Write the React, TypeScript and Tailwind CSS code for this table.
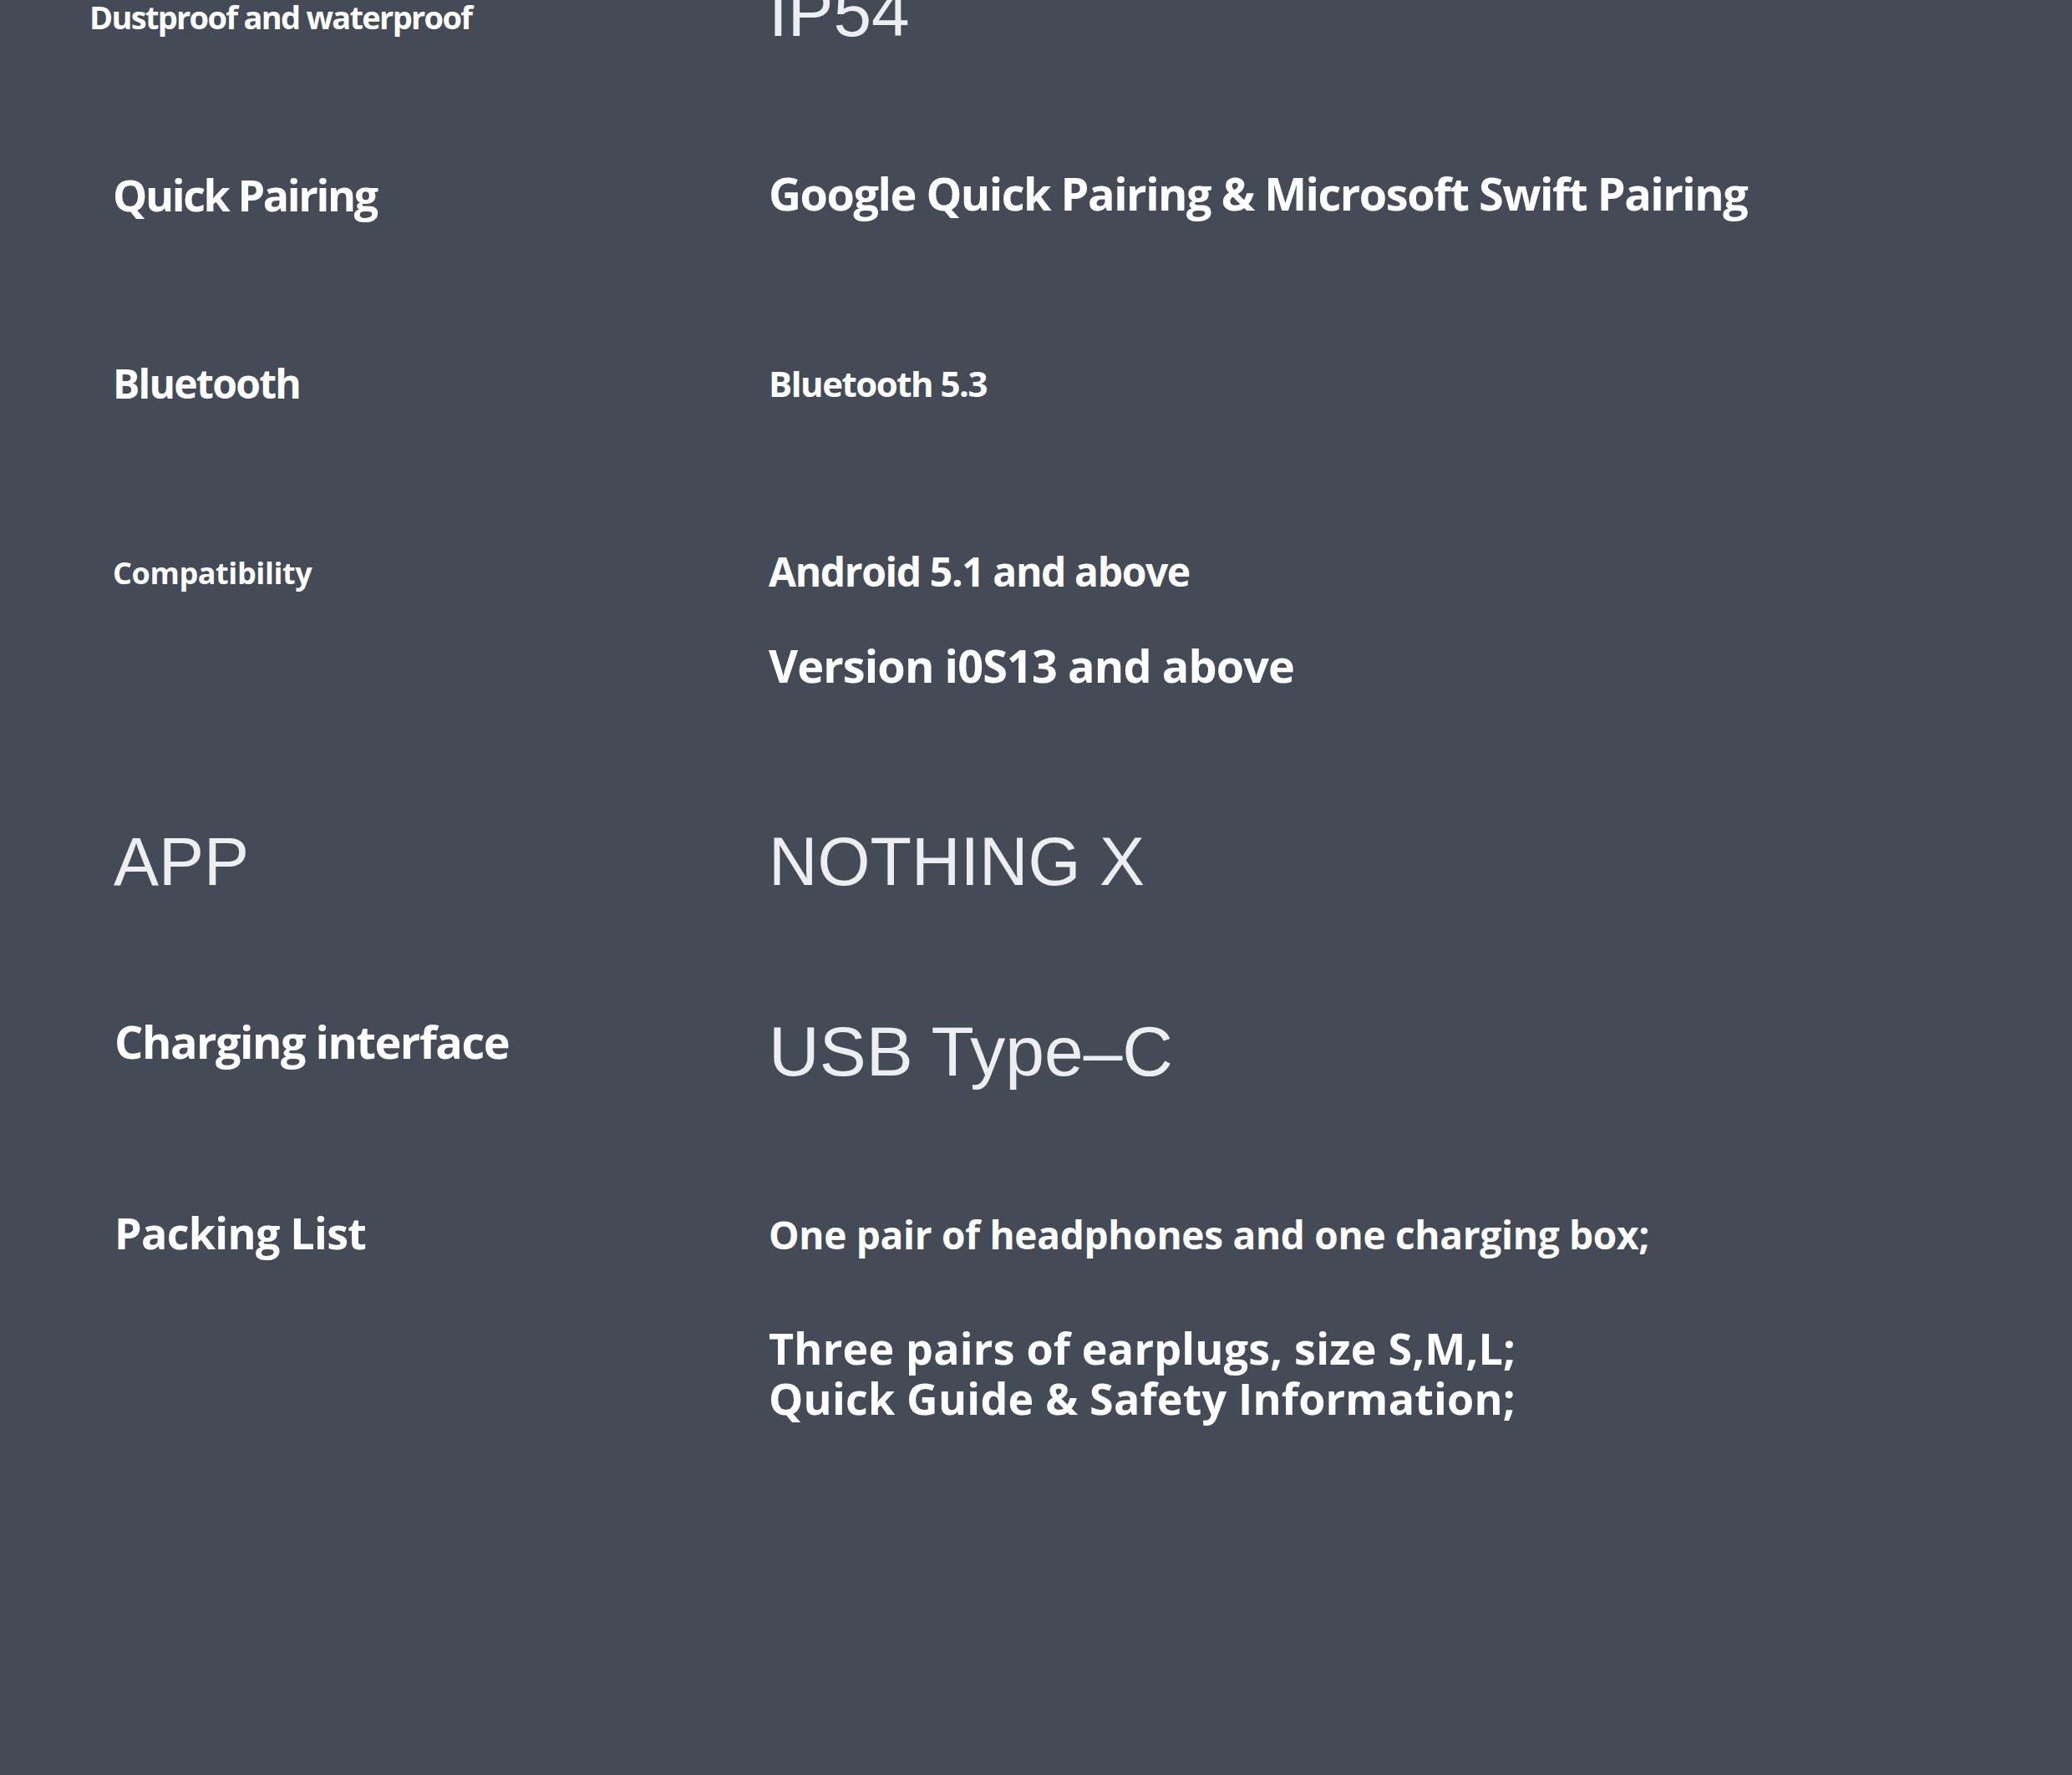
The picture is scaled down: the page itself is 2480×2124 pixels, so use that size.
const bold = "font-['Open_Sans','Noto_Sans',sans-serif] font-bold text-white whitespace-nowrap";
const thin = "font-['Liberation_Sans','Arial',sans-serif] font-normal text-[#eceef1] leading-none whitespace-nowrap";

export default function App() {
  return (
    <div className="min-h-[2124px] w-full overflow-hidden bg-[#444a56]">
      <div className="-mt-[26px] pl-[135px]">
        {/* Dustproof */}
        <div className="grid h-[230px] grid-cols-[785px_1fr] items-start">
          <p className={`${bold} -ml-[28px] mt-[27px] text-[38px] leading-none tracking-[-1.7px]`}>Dustproof and waterproof</p>
          <p className={`${thin} text-[82px]`}>IP54</p>
        </div>

        {/* Quick pairing */}
        <div className="grid h-[231px] grid-cols-[785px_1fr] items-start">
          <p className={`${bold} mt-[3px] text-[52px] leading-none tracking-[-2.4px]`}>Quick Pairing</p>
          <p className={`${bold} text-[54px] leading-none tracking-[-1.5px]`}>Google Quick Pairing &amp; Microsoft Swift Pairing</p>
        </div>

        {/* Bluetooth */}
        <div className="grid h-[225px] grid-cols-[785px_1fr] items-start">
          <p className={`${bold} text-[48px] leading-none tracking-[-1.7px]`}>Bluetooth</p>
          <p className={`${bold} mt-[3px] text-[42px] leading-none tracking-[-1.5px]`}>Bluetooth 5.3</p>
        </div>

        {/* Compatibility */}
        <div className="grid h-[331px] grid-cols-[785px_1fr] items-start">
          <p className={`${bold} mt-[8px] text-[36px] leading-none tracking-[-0.4px]`}>Compatibility</p>
          <div className="flex flex-col">
            <p className={`${bold} text-[48px] leading-none tracking-[-1.4px]`}>Android 5.1 and above</p>
            <p className={`${bold} mt-[61px] text-[54px] leading-none tracking-[-0.9px]`}>Version i0S13 and above</p>
          </div>
        </div>

        {/* App */}
        <div className="grid h-[225px] grid-cols-[785px_1fr] items-start">
          <p className={`${thin} ml-[1px] text-[81px]`}>APP</p>
          <p className={`${thin} text-[81px]`}>NOTHING X</p>
        </div>

        {/* Charging */}
        <div className="grid h-[233px] grid-cols-[785px_1fr] items-start">
          <p className={`${bold} ml-[2px] mt-[3px] text-[54px] leading-none tracking-[-1.5px]`}>Charging interface</p>
          <p className={`${thin} text-[84px]`}>USB Type–C</p>
        </div>

        {/* Packing list */}
        <div className="grid grid-cols-[785px_1fr] items-start">
          <p className={`${bold} ml-[2px] text-[52px] leading-none tracking-[-0.7px]`}>Packing List</p>
          <div className="mt-[5px] flex flex-col">
            <p className={`${bold} text-[46px] leading-none tracking-[-0.3px]`}>One pair of headphones and one charging box;</p>
            <p className={`${bold} mt-[83px] text-[52px] leading-[60px] tracking-[0.2px]`}>
              Three pairs of earplugs, size S,M,L;
              <br />
              Quick Guide &amp; Safety Information;
            </p>
          </div>
        </div>
      </div>
    </div>
  );
}
